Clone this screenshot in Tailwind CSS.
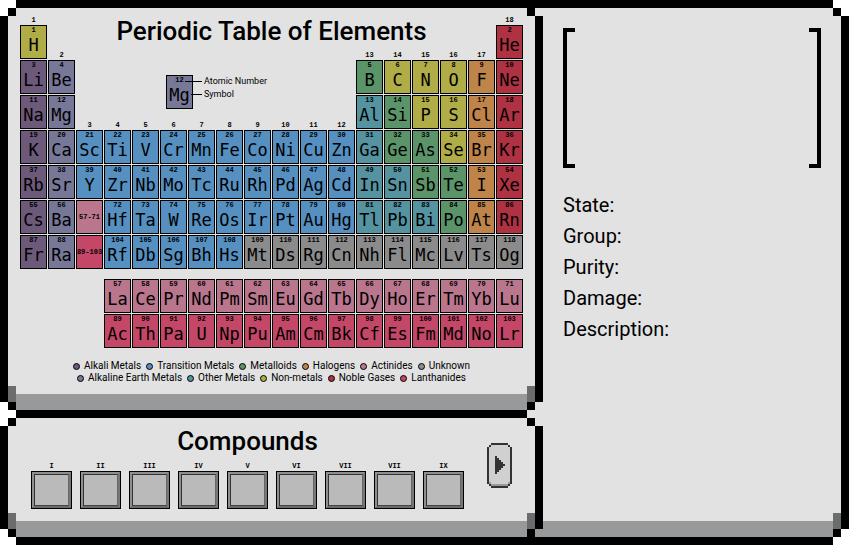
<!DOCTYPE html>
<html lang="en">
<head>
<meta charset="utf-8">
<title>Periodic Table of Elements</title>
<script src="https://cdn.jsdelivr.net/npm/@tailwindcss/browser@4"></script>
</head>
<body class="bg-white text-black font-[Roboto,sans-serif]">
<main class="grid min-h-screen grid-cols-[543px_1fr] bg-[#e2e2e2]">

  <div class="flex flex-col">
    <!-- Periodic table panel -->
    <section class="relative border-8 border-black bg-[#e2e2e2]">
      <div id="table" class="grid grid-cols-[repeat(18,27px)] grid-rows-[16px_repeat(7,34px)_8px_repeat(2,34px)] justify-center gap-px">
        <h1 class="col-start-2 col-end-18 row-start-1 row-end-3 text-center text-[26px] leading-[46px] font-medium">Periodic Table of Elements</h1>
        <div class="col-start-6 col-end-12 row-start-3 row-end-5 flex items-start pt-[15px] pl-[6px]">
          <div class="flex h-[34px] w-[27px] flex-col items-center border border-black bg-[#777797]">
            <span class="font-[Liberation_Mono,monospace] text-[7px] leading-[9px] font-bold">12</span>
            <span class="font-[DejaVu_Sans_Mono,monospace] text-[17px] leading-5">Mg</span>
          </div>
          <div class="relative -ml-2 text-[9px] leading-[13px]">
            <p class="flex items-center gap-[2px]"><span class="h-px w-[17px] bg-black"></span>Atomic Number</p>
            <p class="flex items-center gap-[2px]"><span class="ml-[6px] h-px w-[11px] bg-black"></span>Symbol</p>
          </div>
        </div>
      </div>
      <div id="legend" class="flex flex-col items-center pt-3 pb-[10px] text-[10px] leading-3"></div>
      <div class="h-4 bg-[#98999a]"></div>

      <i class="absolute -top-2 -left-2 size-4 bg-white"></i><i class="absolute top-0 left-0 size-2 bg-black"></i>
      <i class="absolute top-0 -right-2 h-2 w-4 bg-[#e2e2e2]"></i><i class="absolute top-0 right-0 size-2 bg-black"></i>
      <i class="absolute bottom-2 left-0 h-4 w-2 bg-[#6b6c6d]"></i><i class="absolute right-0 bottom-2 h-4 w-2 bg-[#6b6c6d]"></i>
      <i class="absolute -bottom-2 -left-2 size-4 bg-white"></i><i class="absolute bottom-0 left-0 size-2 bg-black"></i>
      <i class="absolute -right-2 -bottom-2 size-4 bg-[#e2e2e2]"></i><i class="absolute right-0 bottom-0 size-2 bg-black"></i>
    </section>

    <!-- Compounds panel -->
    <section class="relative -mt-2 flex grow flex-col border-8 border-black bg-[#e2e2e2]">
      <div class="flex grow items-start pl-[23px]">
        <div>
          <h2 class="pt-2 text-center text-[26px] leading-[30px] font-medium">Compounds</h2>
          <ol id="slots" class="flex gap-2 pt-[6px]"></ol>
        </div>
        <button type="button" aria-label="Next compounds" class="mt-[25px] ml-[23px]">
          <svg class="block" width="25" height="45" viewBox="0 0 25 45" shape-rendering="crispEdges">
            <path fill="#d0d0d0" d="M2 4h2V2h17v2h2v37h-2v2H4v-2H2z"/>
            <path fill="#999" d="M2 39h2v2h17v-2h2v2h-2v2H4v-2H2z"/>
            <path fill="#333" d="M4 0h17v2H4zM4 43h17v2H4zM0 4h2v37H0zM23 4h2v37h-2zM2 2h2v2H2zM21 2h2v2h-2zM2 41h2v2H2zM21 41h2v2h-2z"/>
            <path fill="#333" d="M8 13H10V15H12V17H14V19H16V21H18V23H16V25H14V27H12V29H10V31H8Z"/>
          </svg>
        </button>
      </div>
      <div class="h-4 bg-[#98999a]"></div>

      <i class="absolute -top-2 -left-2 size-4 bg-white"></i><i class="absolute top-0 left-0 size-2 bg-black"></i>
      <i class="absolute -top-2 -right-2 size-4 bg-[#e2e2e2]"></i><i class="absolute top-0 right-0 size-2 bg-black"></i>
      <i class="absolute bottom-2 left-0 h-4 w-2 bg-[#6b6c6d]"></i><i class="absolute right-0 bottom-2 h-4 w-2 bg-[#6b6c6d]"></i>
      <i class="absolute -bottom-2 -left-2 size-4 bg-white"></i><i class="absolute bottom-0 left-0 size-2 bg-black"></i>
      <i class="absolute -right-2 bottom-0 size-2 bg-[#98999a]"></i><i class="absolute right-0 bottom-0 size-2 bg-black"></i>
    </section>
  </div>

  <!-- Element details panel -->
  <section class="relative flex flex-col border-y-8 border-r-8 border-black bg-[#e2e2e2]">
    <div class="grow px-5 pt-5">
      <div class="flex h-[140px] justify-between">
        <span class="w-3 border-4 border-r-0 border-black"></span>
        <span class="w-3 border-4 border-l-0 border-black"></span>
      </div>
      <dl class="pt-[22px] text-[20px] leading-[31px]">
        <div class="flex"><dt>State:</dt><dd></dd></div>
        <div class="flex"><dt>Group:</dt><dd></dd></div>
        <div class="flex"><dt>Purity:</dt><dd></dd></div>
        <div class="flex"><dt>Damage:</dt><dd></dd></div>
        <div class="flex"><dt>Description:</dt><dd></dd></div>
      </dl>
    </div>
    <div class="h-4 bg-[#98999a]"></div>
    <i class="absolute -top-2 -right-2 size-4 bg-white"></i><i class="absolute top-0 right-0 size-2 bg-black"></i>
    <i class="absolute right-0 bottom-2 h-4 w-2 bg-[#6b6c6d]"></i>
    <i class="absolute -right-2 -bottom-2 size-4 bg-white"></i><i class="absolute right-0 bottom-0 size-2 bg-black"></i>
  </section>
</main>

<script>
const fills = {
  a: 'bg-[#6d597a]', e: 'bg-[#777797]', t: 'bg-[#5690c0]', o: 'bg-[#5593a0]',
  m: 'bg-[#5c946a]', n: 'bg-[#b0ad48]', h: 'bg-[#bf844a]', g: 'bg-[#ae3242]',
  p: 'bg-[#b9768c]', l: 'bg-[#c44767]', u: 'bg-[#8b8b8b]'
};
// Each run: grid row, first column, first atomic number, "symbol.category" list
const runs = [
  [2, 1, 1, 'H.n'], [2, 18, 2, 'He.g'],
  [3, 1, 3, 'Li.a Be.e'], [3, 13, 5, 'B.m C.n N.n O.n F.h Ne.g'],
  [4, 1, 11, 'Na.a Mg.e'], [4, 13, 13, 'Al.o Si.m P.n S.n Cl.h Ar.g'],
  [5, 1, 19, 'K.a Ca.e Sc.t Ti.t V.t Cr.t Mn.t Fe.t Co.t Ni.t Cu.t Zn.t Ga.o Ge.m As.m Se.n Br.h Kr.g'],
  [6, 1, 37, 'Rb.a Sr.e Y.t Zr.t Nb.t Mo.t Tc.t Ru.t Rh.t Pd.t Ag.t Cd.t In.o Sn.o Sb.m Te.m I.h Xe.g'],
  [7, 1, 55, 'Cs.a Ba.e'], [7, 4, 72, 'Hf.t Ta.t W.t Re.t Os.t Ir.t Pt.t Au.t Hg.t Tl.o Pb.o Bi.o Po.m At.h Rn.g'],
  [8, 1, 87, 'Fr.a Ra.e'], [8, 4, 104, 'Rf.t Db.t Sg.t Bh.t Hs.t Mt.u Ds.u Rg.u Cn.u Nh.u Fl.u Mc.u Lv.u Ts.u Og.u'],
  [10, 4, 57, 'La.p Ce.p Pr.p Nd.p Pm.p Sm.p Eu.p Gd.p Tb.p Dy.p Ho.p Er.p Tm.p Yb.p Lu.p'],
  [11, 4, 89, 'Ac.l Th.l Pa.l U.l Np.l Pu.l Am.l Cm.l Bk.l Cf.l Es.l Fm.l Md.l No.l Lr.l']
];
const at = (r, c) => `style="grid-row:${r};grid-column:${c}"`;
let html = '';
for (const [row, col, first, list] of runs)
  list.split(' ').forEach((item, i) => {
    const [symbol, kind] = item.split('.');
    html += `<button type="button" class="flex flex-col items-center border border-black ${fills[kind]}" ${at(row, col + i)}>
      <span class="font-[Liberation_Mono,monospace] text-[7px] leading-[9px] font-bold">${first + i}</span>
      <span class="font-[DejaVu_Sans_Mono,monospace] text-[17px] leading-5">${symbol}</span></button>`;
  });
for (const [row, text, kind] of [[7, '57-71', 'p'], [8, '89-103', 'l']])
  html += `<div class="flex items-center justify-center border border-black font-[Liberation_Mono,monospace] text-[7px] leading-[9px] font-bold whitespace-nowrap ${fills[kind]}" ${at(row, 3)}>${text}</div>`;
const labelRow = [1, 2, 4, 4, 4, 4, 4, 4, 4, 4, 4, 4, 2, 2, 2, 2, 2, 1];
labelRow.forEach((row, i) => {
  html += `<span class="self-end justify-self-center font-[Liberation_Mono,monospace] text-[7px] leading-[7px] font-bold" ${at(row, i + 1)}>${i + 1}</span>`;
});
document.getElementById('table').insertAdjacentHTML('beforeend', html);

const legend = [
  [['Alkali Metals', 'a'], ['Transition Metals', 't'], ['Metalloids', 'm'], ['Halogens', 'h'], ['Actinides', 'p'], ['Unknown', 'u']],
  [['Alkaline Earth Metals', 'e'], ['Other Metals', 'o'], ['Non-metals', 'n'], ['Noble Gases', 'g'], ['Lanthanides', 'l']]
];
document.getElementById('legend').innerHTML = legend.map(row =>
  `<ul class="flex gap-[5px]">${row.map(([name, kind]) =>
    `<li class="flex items-center gap-1 whitespace-nowrap"><span class="size-[7px] rounded-full border border-black ${fills[kind]}"></span>${name}</li>`).join('')}</ul>`).join('');

document.getElementById('slots').innerHTML = ['I', 'II', 'III', 'IV', 'V', 'VI', 'VII', 'VII', 'IX'].map((n, i) =>
  `<li class="flex flex-col items-center">
    <label for="slot${i}" class="font-[Liberation_Mono,monospace] text-[7px] leading-[9px] font-bold">${n}</label>
    <button type="button" id="slot${i}" class="h-[38px] w-[41px] border border-black bg-[#777]">
      <span class="block h-full border-2 border-t-[#8f8f8f] border-r-[#777] border-b-[#6b6b6b] border-l-[#8f8f8f]"><span class="block h-full border border-t-[#333] border-r-[#666] border-b-[#444] border-l-[#333] bg-[#bababa]"></span></span>
    </button></li>`).join('');
</script>
</body>
</html>
